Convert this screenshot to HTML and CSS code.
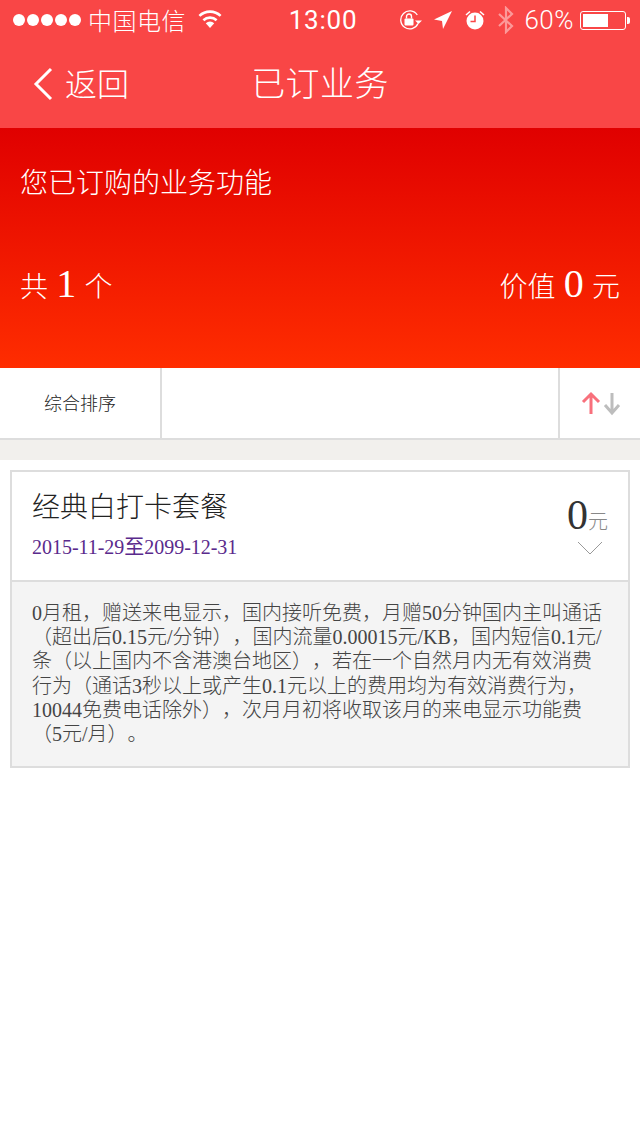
FILE: index.html
```html
<!DOCTYPE html>
<html lang="zh-CN">
<head>
<meta charset="utf-8">
<title>已订业务</title>
<link rel="stylesheet" href="styles.css">
</head>
<body>
<header class="top">
  <div class="status">
    <div class="status-left">
      <span class="dots"><i></i><i></i><i></i><i></i><i></i></span>
      <span class="carrier">中国电信</span>
      <svg class="wifi" width="26" height="20" viewBox="0 0 26 20"><path d="M13 19 L8.8 14.2 A6 6 0 0 1 17.2 14.2 Z" fill="#fff"/><path d="M6.4 11.3 A9.6 9.6 0 0 1 19.6 11.3" fill="none" stroke="#fff" stroke-width="2.6"/><path d="M2.4 6.9 A15.4 15.4 0 0 1 23.6 6.9" fill="none" stroke="#fff" stroke-width="2.6"/></svg>
    </div>
    <div class="time">13:00</div>
    <div class="status-right">
      <svg width="24" height="20" viewBox="0 0 24 20"><path d="M19 13.5 A9 9 0 1 1 18.3 5" fill="none" stroke="#fff" stroke-width="1.3"/><path d="M16 10.5 h7 l-3.5 3.5 z" fill="#fff"/><rect x="5.5" y="8.5" width="9" height="7" rx="1" fill="#fff"/><path d="M7.5 8.5 V6.5 a2.5 2.5 0 0 1 5 0 V8.5" fill="none" stroke="#fff" stroke-width="1.4"/></svg>
      <svg class="loc" width="18" height="20" viewBox="0 0 18 20"><path d="M18 1 L9 19 L8 11 L0 9.6 Z" fill="#fff"/></svg>
      <svg class="alarm" width="20" height="20" viewBox="0 0 20 20"><circle cx="10" cy="11" r="8.5" fill="#fff"/><path d="M10 5.5 V11.5 H5.5" fill="none" stroke="#f94646" stroke-width="1.5"/><path d="M1 5 L5 1.5 M19 5 L15 1.5" stroke="#fff" stroke-width="1.6"/></svg>
      <svg class="bt" width="16" height="28" viewBox="0 0 16 28"><path d="M1 8 L14 20 L8 26 V2 L14 8 L1 20" fill="none" stroke="#fff" stroke-opacity=".45" stroke-width="2.2"/></svg>
      <span class="pct">60%</span>
      <span class="battery"><span class="level"></span></span><span class="nub"></span>
    </div>
  </div>
  <nav class="nav">
    <a class="back"><svg width="22" height="34" viewBox="0 0 22 34"><path d="M19 2 L4 17 L19 32" fill="none" stroke="#fff" stroke-width="3"/></svg><span>返回</span></a>
    <h1>已订业务</h1>
  </nav>
</header>
<section class="hero">
  <p class="hero-title">您已订购的业务功能</p>
  <div class="hero-stats">
    <span>共 <b>1</b> 个</span>
    <span>价值 <b>0</b> 元</span>
  </div>
</section>
<section class="tabs">
  <div class="tab-sort">综合排序</div>
  <div class="tab-space"></div>
  <div class="tab-arrows">
    <svg width="44" height="26" viewBox="0 0 44 26"><path d="M11 24 V4 M3 12 L11 4 L19 12" fill="none" stroke="#f8707c" stroke-width="3"/><path d="M32 3 V23 M25 15 L32 23 L39 15" fill="none" stroke="#bdbdbd" stroke-width="3"/></svg>
  </div>
</section>
<div class="band"></div>
<article class="card">
  <div class="card-head">
    <div class="card-info">
      <h2>经典白打卡套餐</h2>
      <p class="dates">2015-11-29至2099-12-31</p>
    </div>
    <div class="card-price">
      <div class="price"><b>0</b><span>元</span></div>
      <svg width="26" height="14" viewBox="0 0 26 14"><path d="M1 1 L13 13 L25 1" fill="none" stroke="#999" stroke-width="1"/></svg>
    </div>
  </div>
  <div class="card-body">0月租，赠送来电显示，国内接听免费，月赠50分钟国内主叫通话（超出后0.15元/分钟），国内流量0.00015元/KB，国内短信0.1元/条（以上国内不含港澳台地区），若在一个自然月内无有效消费行为（通话3秒以上或产生0.1元以上的费用均为有效消费行为，10044免费电话除外），次月月初将收取该月的来电显示功能费（5元/月）。</div>
</article>
</body>
</html>
```
FILE: styles.css
```css
* { box-sizing: border-box; }
html, body { margin: 0; padding: 0; }
body { width: 640px; height: 1136px; background: #fff; overflow: hidden; font-family: "Liberation Serif", "Noto Sans CJK SC", serif; color: #333; text-spacing-trim: space-all; }
h1, h2, p { margin: 0; font-weight: normal; }
.top { background: #f94646; color: #fff; height: 128px; font-family: "Noto Sans CJK SC", sans-serif; }
.status { height: 40px; display: grid; grid-template-columns: 1fr auto 1fr; align-items: center; padding: 0 10px 0 13px; }
.status-left, .status-right { display: flex; align-items: center; }
.status-right { justify-content: flex-end; }
.dots { display: flex; gap: 2px; margin-right: 7px; }
.dots i { width: 12px; height: 12px; border-radius: 50%; background: #fff; }
.carrier { font-size: 24px; line-height: 40px; font-weight: 300; margin-top: -1px; letter-spacing: 0.5px; }
.wifi { margin-left: 11px; margin-top: -2px; }
.time { font: 400 26px/40px "Roboto", sans-serif; letter-spacing: 0.8px; margin-left: 3px; }
.status-right svg { flex: none; }
.loc { margin-left: 11px; }
.alarm { margin-left: 13px; }
.bt { margin-left: 13px; }
.pct { font: 300 26px/40px "Roboto", sans-serif; margin-left: 10px; letter-spacing: 0.5px; }
.battery { width: 46px; height: 19px; border: 1px solid #fff; border-radius: 3px; margin-left: 6px; padding: 2px; display: block; }
.level { display: block; width: 25px; height: 13px; background: #fff; }
.nub { width: 3px; height: 7px; background: #fff; margin-left: 1px; border-radius: 0 2px 2px 0; }
.nav { height: 88px; position: relative; display: flex; align-items: center; padding-left: 32px; }
.back { display: flex; align-items: center; gap: 11px; font-size: 32px; font-weight: 300; line-height: 40px; }
.back span { margin-bottom: 4px; }
.nav h1 { position: absolute; left: 0; right: 0; top: 0; text-align: center; font-size: 34px; line-height: 84px; font-weight: 300; letter-spacing: 0.4px; }
.hero { height: 240px; background: linear-gradient(#e00000, #ff2d00); color: #fff; padding: 33px 20px 0 20px; font-family: "Noto Sans CJK SC", sans-serif; }
.hero-title { font-size: 28px; line-height: 40px; font-weight: 300; }
.hero-stats { margin-top: 58px; display: flex; justify-content: space-between; align-items: baseline; font-size: 28px; line-height: 50px; font-weight: 300; }
.hero-stats b { font: normal 40px/50px "Liberation Serif", serif; margin: 0 2px; }
.tabs { height: 72px; display: flex; border-bottom: 2px solid #ddd; }
.tab-sort { width: 162px; border-right: 2px solid #ddd; text-align: center; font: 300 18px/68px "Noto Sans CJK SC", sans-serif; color: #222; }
.tab-space { flex: 1; }
.tab-arrows { width: 82px; border-left: 2px solid #ddd; display: flex; align-items: center; justify-content: center; padding-left: 4px; }
.band { height: 20px; background: #f2f0ed; }
.card { margin: 10px 10px 0; border: 2px solid #ddd; }
.card-head { height: 110px; border-bottom: 2px solid #ddd; display: flex; justify-content: space-between; padding: 0 20px; }
.card-info h2 { font: 300 28px/40px "Noto Sans CJK SC", sans-serif; color: #222; margin-top: 13px; }
.dates { font-size: 20px; line-height: 26px; color: #5a2a8c; margin-top: 9px; letter-spacing: -0.03px; }
.card-price { display: flex; flex-direction: column; align-items: flex-end; padding-top: 21px; }
.price { display: flex; align-items: baseline; line-height: 44px; }
.price b { font-weight: normal; font-size: 42px; color: #333; }
.price span { font: 300 20px "Noto Sans CJK SC", sans-serif; color: #888; }
.card-price svg { margin: 4px 5px 0 0; }
.card-body { background: #f4f4f4; padding: 19px 20px 0; font-size: 20px; font-weight: 300; line-height: 24.2px; color: #444; height: 184px; }
```
